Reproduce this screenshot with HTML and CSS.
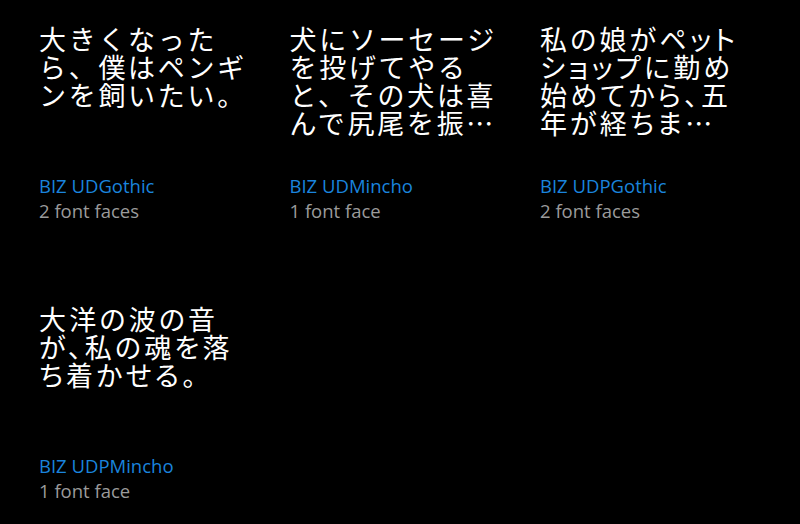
FILE: index.html
```html
<!DOCTYPE html>
<html lang="ja">
<head>
<meta charset="utf-8">
<title>Fonts</title>
<link rel="stylesheet" href="styles.css">
</head>
<body>
<div class="grid">
  <div class="item">
    <div class="preview">大きくなった<br>ら、僕はペンギ<br>ンを飼いたい。</div>
    <div class="name">BIZ UDGothic</div>
    <div class="faces">2 font faces</div>
  </div>
  <div class="item">
    <div class="preview">犬にソーセージ<br>を投げてやる<br>と、その犬は喜<br>んで尻尾を振…</div>
    <div class="name">BIZ UDMincho</div>
    <div class="faces">1 font face</div>
  </div>
  <div class="item">
    <div class="preview prop">私の娘がペット<br>ショップに勤め<br>始めてから、五<br>年が経ちま…</div>
    <div class="name">BIZ UDPGothic</div>
    <div class="faces">2 font faces</div>
  </div>
  <div class="item">
    <div class="preview prop">大洋の波の音<br>が、私の魂を落<br>ち着かせる。</div>
    <div class="name">BIZ UDPMincho</div>
    <div class="faces">1 font face</div>
  </div>
</div>
</body>
</html>
```

FILE: styles.css
```css
html, body {
  margin: 0;
  padding: 0;
  background: #000;
  height: 100%;
}
body {
  font-family: "Open Sans", "Noto Sans", sans-serif;
  color: #fff;
  overflow: hidden;
}
.grid {
  display: grid;
  grid-template-columns: repeat(3, 250.5px);
  row-gap: 82px;
  padding: 25px 0 0 39px;
}
.item {
  display: flex;
  flex-direction: column;
}
.preview {
  height: 112px;
  margin-bottom: 36px;
  font-family: "Noto Sans CJK JP", "Noto Sans", sans-serif;
  font-size: 27px;
  font-weight: 400;
  line-height: 28px;
  letter-spacing: 2.7px;
  white-space: nowrap;
  color: #fff;
}
.preview.prop {
  font-feature-settings: "palt";
  letter-spacing: 3.2px;
}
.name {
  font-size: 18.5px;
  line-height: 25px;
  color: #1a84dd;
}
.faces {
  font-size: 18.5px;
  line-height: 25px;
  color: #9b9b9b;
}
```
